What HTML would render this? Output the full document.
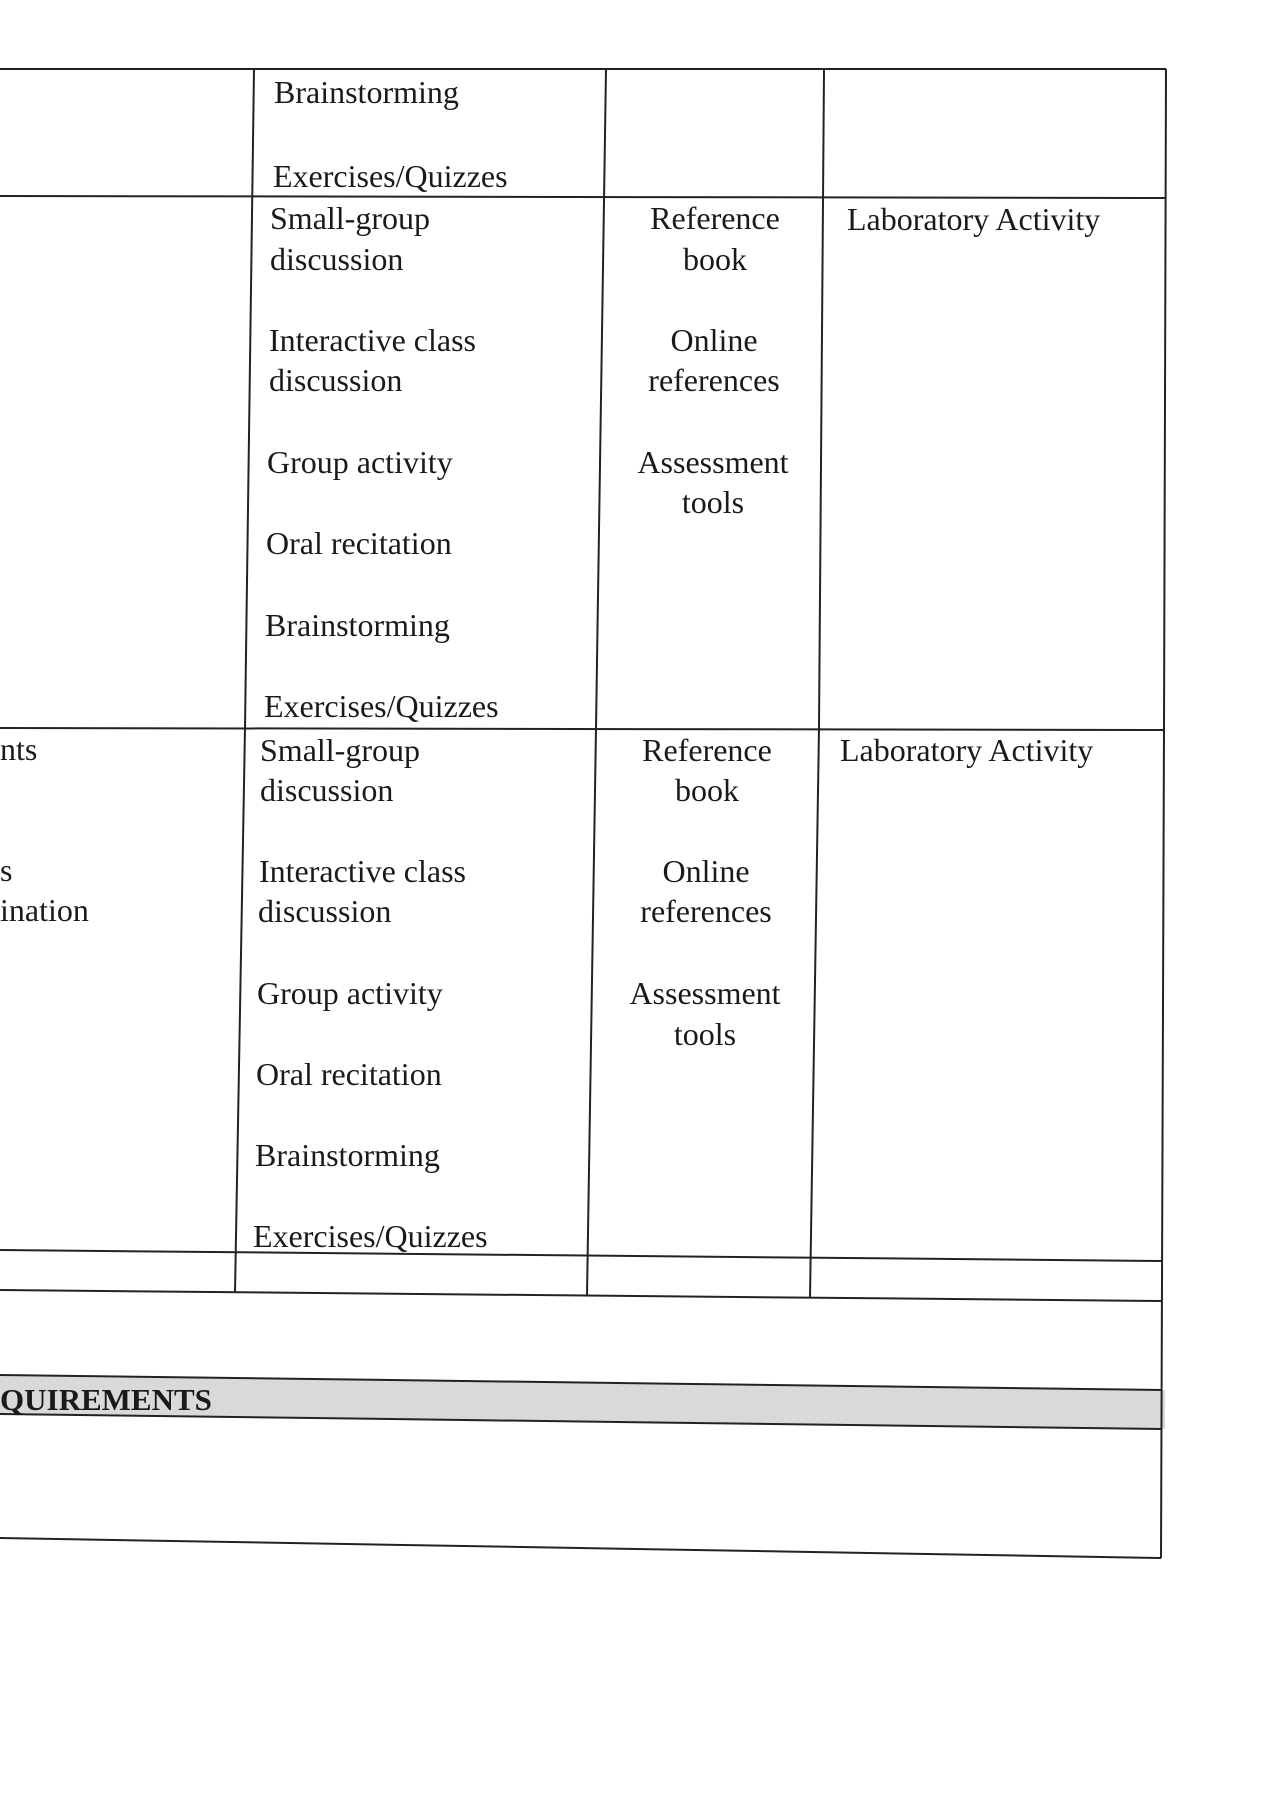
<!DOCTYPE html>
<html><head><meta charset="utf-8"><style>
html,body{margin:0;padding:0;background:#fff;width:1274px;height:1800px;overflow:hidden}
.t{position:absolute;font-family:"Liberation Serif","Times New Roman","DejaVu Serif",serif;font-size:32px;color:#1a1a1a;line-height:32px;white-space:nowrap;transform:translateY(-16px)}
.c{text-align:center;width:200px}
</style></head><body>
<svg width="1274" height="1800" style="position:absolute;left:0;top:0">
<polygon points="0,1375 1165,1390 1165,1429 0,1414" fill="#d9d9d9"/>
<g stroke="#222" stroke-width="2" fill="none">
<line x1="0" y1="69" x2="1166" y2="69"/>
<line x1="0" y1="196" x2="1166" y2="198"/>
<line x1="0" y1="728" x2="1164" y2="730"/>
<line x1="0" y1="1250" x2="1162" y2="1261"/>
<line x1="0" y1="1290" x2="1162" y2="1301"/>
<line x1="0" y1="1375" x2="1162" y2="1390"/>
<line x1="0" y1="1414" x2="1162" y2="1429"/>
<line x1="0" y1="1538" x2="1161" y2="1558"/>
<polyline points="254,69 245,728 235,1293"/>
<polyline points="606,69 596,728 587,1296"/>
<polyline points="824,69 819,728 810,1298"/>
<polyline points="1166,69 1164,728 1161,1558"/>
</g></svg>
<div class="t" style="left:274px;top:92px">Brainstorming</div>
<div class="t" style="left:273px;top:176px">Exercises/Quizzes</div>

<div class="t" style="left:270px;top:218px">Small-group</div>
<div class="t" style="left:270px;top:259px">discussion</div>
<div class="t" style="left:269px;top:340px">Interactive class</div>
<div class="t" style="left:269px;top:380px">discussion</div>
<div class="t" style="left:267px;top:462px">Group activity</div>
<div class="t" style="left:266px;top:543px">Oral recitation</div>
<div class="t" style="left:265px;top:625px">Brainstorming</div>
<div class="t" style="left:264px;top:706px">Exercises/Quizzes</div>
<div class="t c" style="left:615px;top:218px">Reference</div>
<div class="t c" style="left:615px;top:259px">book</div>
<div class="t c" style="left:614px;top:340px">Online</div>
<div class="t c" style="left:614px;top:380px">references</div>
<div class="t c" style="left:613px;top:462px">Assessment</div>
<div class="t c" style="left:613px;top:502px">tools</div>
<div class="t" style="left:847px;top:219px">Laboratory Activity</div>

<div class="t" style="left:0px;top:749px">nts</div>
<div class="t" style="left:0px;top:870px">s</div>
<div class="t" style="left:0px;top:910px">ination</div>
<div class="t" style="left:260px;top:750px">Small-group</div>
<div class="t" style="left:260px;top:790px">discussion</div>
<div class="t" style="left:259px;top:871px">Interactive class</div>
<div class="t" style="left:258px;top:911px">discussion</div>
<div class="t" style="left:257px;top:993px">Group activity</div>
<div class="t" style="left:256px;top:1074px">Oral recitation</div>
<div class="t" style="left:255px;top:1155px">Brainstorming</div>
<div class="t" style="left:253px;top:1236px">Exercises/Quizzes</div>
<div class="t c" style="left:607px;top:750px">Reference</div>
<div class="t c" style="left:607px;top:790px">book</div>
<div class="t c" style="left:606px;top:871px">Online</div>
<div class="t c" style="left:606px;top:911px">references</div>
<div class="t c" style="left:605px;top:993px">Assessment</div>
<div class="t c" style="left:605px;top:1034px">tools</div>
<div class="t" style="left:840px;top:750px">Laboratory Activity</div>

<div class="t" style="left:0px;top:1400px;font-weight:bold;font-size:31px">QUIREMENTS</div>
</body></html>
